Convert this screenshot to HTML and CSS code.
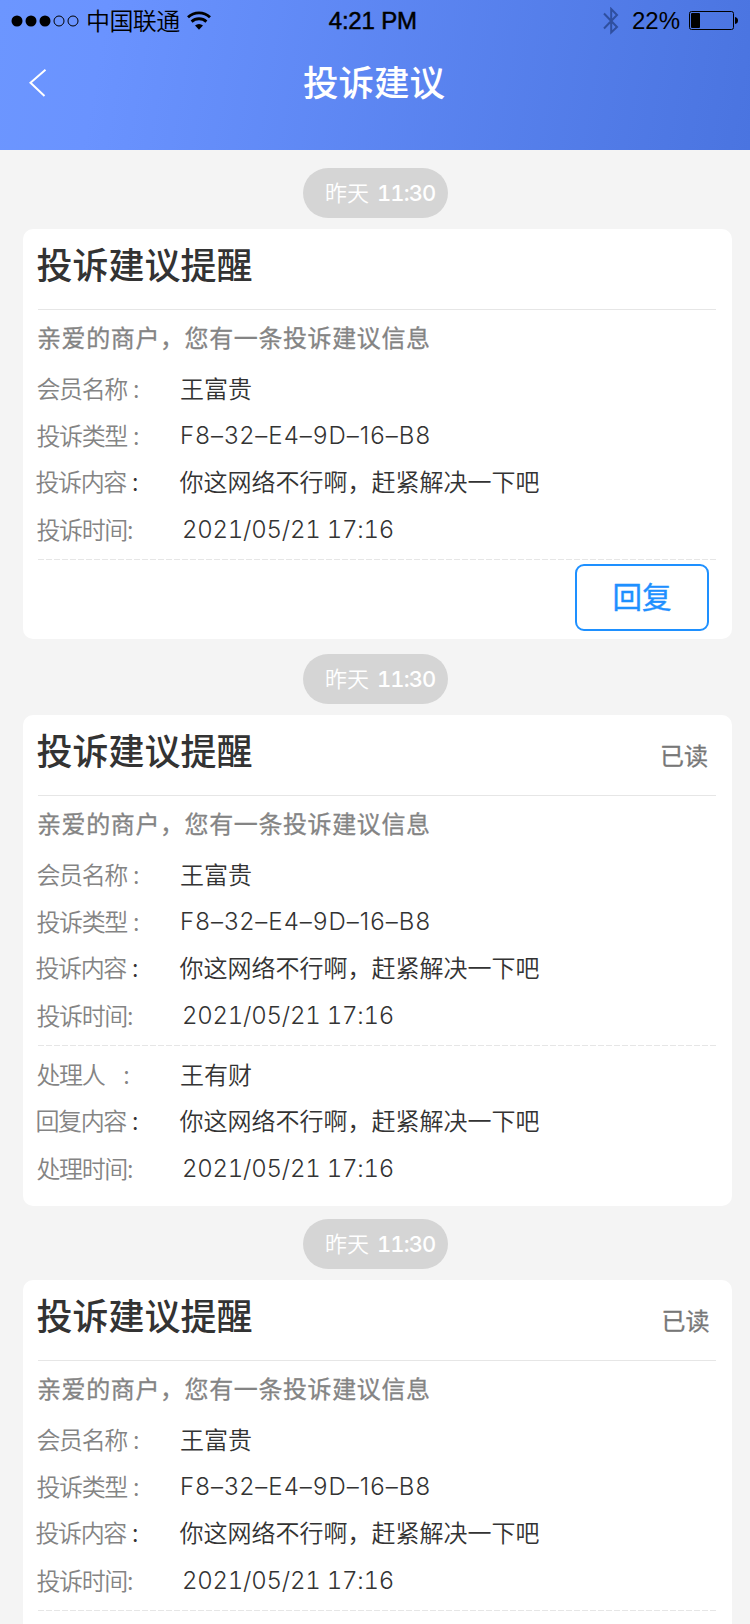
FILE: index.html
```
<!DOCTYPE html>
<html lang="zh-CN">

<head>
	<meta charset="utf-8">
	<title>投诉建议</title>
	<link rel="stylesheet" href="styles.css">
</head>

<body>

	<!--HEADER-->
	<header class="header">
		<div class="statusbar">
			<div class="status-left">
				<svg class="signal" width="70" height="12" viewBox="0 0 70 12">
					<circle cx="6" cy="6" r="5.5" />
					<circle cx="20" cy="6" r="5.5" />
					<circle cx="34" cy="6" r="5.5" />
					<circle class="empty" cx="48" cy="6" r="5" />
					<circle class="empty" cx="62" cy="6" r="5" />
				</svg>
				<span class="carrier">中国联通</span>
				<svg class="wifi" width="24" height="19" viewBox="0 0 24 19">
					<path d="M1 6.2A16 16 0 0 1 23 6.2" />
					<path d="M4.6 10.6A11 11 0 0 1 19.4 10.6" />
					<path class="dot" d="M8 14.6A6 6 0 0 1 16 14.6L12 18.8Z" />
				</svg>
			</div>
			<span class="clock">4:21 PM</span>
			<div class="status-right">
				<svg class="bluetooth" width="16" height="28" viewBox="0 0 16 28">
					<path d="M1 6.5L14 20L8.2 25.5V2L14 8L1 21.5" />
				</svg>
				<span class="percent">22%</span>
				<svg class="battery" width="49" height="19" viewBox="0 0 49 19">
					<rect class="shell" x="0.5" y="0.5" width="44" height="18" rx="2" />
					<rect x="2" y="2" width="9" height="15" rx="1" />
					<path d="M46 6Q49 6.5 49 9.5T46 13Z" />
				</svg>
			</div>
		</div>
		<div class="navbar">
			<svg class="back" width="18" height="28" viewBox="0 0 18 28">
				<path d="M16.5 0.8L1.5 13.8L15.5 27" />
			</svg>
			<h1>投诉建议</h1>
		</div>
	</header>

	<main>
		<!--UNREAD-->
		<div class="time"><span>昨天</span> <b>11:30</b></div>
		<section class="card">
			<div class="card-head">
				<h2>投诉建议提醒</h2>
			</div>
			<p class="tip">亲爱的商户，您有一条投诉建议信息</p>
			<dl>
				<div class="row"><dt>会员名称<i>:</i></dt><dd>王富贵</dd></div>
				<div class="row"><dt>投诉类型<i>:</i></dt><dd class="code">F8–32–E4–9D–16–B8</dd></div>
				<div class="row content"><dt>投诉内容<i>:</i></dt><dd>你这网络不行啊，赶紧解决一下吧</dd></div>
				<div class="row date"><dt>投诉时间<i>:</i></dt><dd>2021/05/21 17:16</dd></div>
			</dl>
			<div class="dash"></div>
			<div class="actions">
				<button>回复</button>
			</div>
		</section>

		<!--READ-->
		<div class="time"><span>昨天</span> <b>11:30</b></div>
		<section class="card replied">
			<div class="card-head">
				<h2>投诉建议提醒</h2>
				<span class="state">已读</span>
			</div>
			<p class="tip">亲爱的商户，您有一条投诉建议信息</p>
			<dl>
				<div class="row"><dt>会员名称<i>:</i></dt><dd>王富贵</dd></div>
				<div class="row"><dt>投诉类型<i>:</i></dt><dd class="code">F8–32–E4–9D–16–B8</dd></div>
				<div class="row content"><dt>投诉内容<i>:</i></dt><dd>你这网络不行啊，赶紧解决一下吧</dd></div>
				<div class="row date"><dt>投诉时间<i>:</i></dt><dd>2021/05/21 17:16</dd></div>
			</dl>
			<div class="dash"></div>
			<dl class="reply">
				<div class="row handler"><dt>处理人<i>:</i></dt><dd>王有财</dd></div>
				<div class="row content"><dt>回复内容<i>:</i></dt><dd>你这网络不行啊，赶紧解决一下吧</dd></div>
				<div class="row date"><dt>处理时间<i>:</i></dt><dd>2021/05/21 17:16</dd></div>
			</dl>
		</section>

		<div class="time"><span>昨天</span> <b>11:30</b></div>
		<section class="card last">
			<div class="card-head">
				<h2>投诉建议提醒</h2>
				<span class="state">已读</span>
			</div>
			<p class="tip">亲爱的商户，您有一条投诉建议信息</p>
			<dl>
				<div class="row"><dt>会员名称<i>:</i></dt><dd>王富贵</dd></div>
				<div class="row"><dt>投诉类型<i>:</i></dt><dd class="code">F8–32–E4–9D–16–B8</dd></div>
				<div class="row content"><dt>投诉内容<i>:</i></dt><dd>你这网络不行啊，赶紧解决一下吧</dd></div>
				<div class="row date"><dt>投诉时间<i>:</i></dt><dd>2021/05/21 17:16</dd></div>
			</dl>
			<div class="dash"></div>
		</section>
	</main>
</body>

</html>
```
FILE: styles.css
```
* {
	box-sizing: border-box;
}

body {
	margin: 0;
	height: 1624px;
	overflow: hidden;
	background-color: #f4f4f4;
	color: #333;
	font-family: "Noto Sans CJK SC", sans-serif;
	font-size: 24px;
	font-weight: 350;
}

h1,
h2,
p,
dl,
dd {
	margin: 0;
}

/* header */
.header {
	height: 150px;
	background: linear-gradient(100deg, #6c96ff 0%, #6a93ff 14%, #4a74e0 100%);
}

.statusbar {
	display: grid;
	grid-template-columns: 1fr auto 1fr;
	align-items: center;
	height: 41px;
	padding: 0 12px 0 11.5px;
	color: #000;
}

.status-left,
.status-right {
	display: flex;
	align-items: center;
}

.status-right {
	justify-content: flex-end;
}

.signal .empty,
.battery .shell {
	fill: none;
	stroke: #000;
	stroke-width: 1;
}

.carrier {
	height: 41px;
	margin-left: 5px;
	line-height: 39px;
	letter-spacing: -0.6px;
}

.wifi {
	margin-left: 7.5px;
}

.wifi path {
	fill: none;
	stroke: #000;
	stroke-width: 2.8;
}

.wifi .dot {
	fill: #000;
	stroke: none;
}

.clock,
.percent {
	font-family: "Liberation Sans", sans-serif;
	font-weight: 400;
}

.clock {
	margin-right: 4px;
	letter-spacing: -0.2px;
	-webkit-text-stroke: 0.5px #000;
}

.bluetooth path {
	fill: none;
	stroke: #2f4f9f;
	stroke-width: 2;
}

.percent {
	margin: 0 9px 0 13px;
}

.signal {
	margin-left: -0.5px;
}

.navbar {
	display: grid;
	grid-template-columns: 60px 1fr 60px;
	align-items: center;
	height: 83px;
}

.back {
	margin-left: 29px;
}

.back path {
	fill: none;
	stroke: #fff;
	stroke-width: 2;
}

h1 {
	height: 54px;
	color: #fff;
	font-size: 35.5px;
	font-weight: 500;
	line-height: 50px;
	text-align: center;
	text-indent: -2px;
}

/* time bubble */
.time {
	display: flex;
	gap: 8px;
	width: 145px;
	height: 50px;
	margin: 18px 0 11px 303px;
	padding-left: 22px;
	border-radius: 25px;
	background-color: #d5d5d5;
	color: #fff;
	font-size: 22px;
	line-height: 47px;
}

.time b {
	font-family: Inter, sans-serif;
	font-weight: 500;
	font-variant-numeric: tabular-nums;
	line-height: 50px;
	letter-spacing: -0.9px;
}

/* cards */
.card {
	width: 709px;
	height: 410px;
	margin-left: 23px;
	padding: 0 16px 0 15px;
	border-radius: 10px;
	background-color: #fff;
}

.card + .time {
	margin-top: 15px;
}

.replied {
	height: 491px;
}

.replied + .time {
	margin-top: 13px;
}

.card-head {
	display: flex;
	justify-content: space-between;
	height: 81px;
	padding-right: 8px;
	border-bottom: 1px solid #e6e6e6;
}

h2 {
	margin-left: -1.5px;
	font-size: 36px;
	font-weight: 500;
	line-height: 69px;
}

.state {
	color: #777;
	font-weight: 400;
	line-height: 80px;
	-webkit-text-stroke: 0.3px #777;
}

.last .state {
	margin-right: -1.5px;
}

.tip {
	height: 55px;
	margin-left: -1px;
	color: #848484;
	font-weight: 400;
	line-height: 54px;
	letter-spacing: 0.6px;
	-webkit-text-stroke: 0.3px #848484;
}

.row {
	display: flex;
	height: 47px;
	line-height: 45px;
}

dt {
	width: 143.5px;
	margin-left: -1.5px;
	color: #848484;
	letter-spacing: -1.4px;
}

dt i {
	margin-left: 6px;
	font-style: normal;
}

.content {
	line-height: 43px;
}

.content dt {
	margin-left: -2.5px;
}

.content dd {
	margin-left: 0.5px;
}

.content i {
	color: #333;
}

.handler i {
	margin-left: 19px;
}

.date dt {
	width: 145.5px;
}

.date i {
	margin-left: 0;
}

.code,
.date dd {
	font-family: Inter, sans-serif;
	font-weight: 300;
	line-height: 47px;
}

.code {
	letter-spacing: 1.05px;
}

.date dd {
	font-variant-numeric: tabular-nums;
	letter-spacing: -0.25px;
}

.dash {
	height: 1px;
	margin: 6px 0 4px;
	background: repeating-linear-gradient(90deg, #e6e6e6 0 6px, transparent 6px 8px);
}

.reply {
	padding-top: 1px;
}

.actions {
	display: flex;
	justify-content: flex-end;
	padding-right: 7px;
}

button {
	width: 134px;
	height: 67px;
	padding: 0 0 5px;
	border: 2px solid #1e90ff;
	border-radius: 9px;
	background: none;
	color: #1e90ff;
	font-family: inherit;
	font-size: 29.5px;
	font-weight: 400;
	-webkit-text-stroke: 0.4px #1e90ff;
}
```
